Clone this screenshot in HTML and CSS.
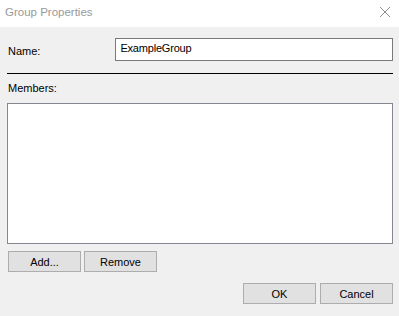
FILE: index.html
```html
<!DOCTYPE html>
<html lang="en">
<head>
    <meta charset="UTF-8">
    <title>Group Properties</title>
    <link rel="stylesheet" href="styles.css">
</head>
<body>
    <!-- Title bar -->
    <div class="titlebar">
        <span class="title">Group Properties</span>
        <svg class="close" width="12" height="12" viewBox="0 0 12 12">
            <path d="M1 1 L11 11 M11 1 L1 11" stroke="#8c8c8c" stroke-width="1" fill="none"/>
        </svg>
    </div>

    <!-- Dialog body -->
    <div class="dialog">
        <div class="name-row">
            <label for="group-name">Name:</label>
            <input type="text" id="group-name" class="textbox" value="ExampleGroup">
        </div>

        <div class="separator"></div>

        <div class="members-label">Members:</div>
        <div class="listbox"></div>

        <div class="list-buttons">
            <button class="btn">Add...</button>
            <button class="btn">Remove</button>
        </div>

        <div class="dialog-buttons">
            <button class="btn">OK</button>
            <button class="btn">Cancel</button>
        </div>
    </div>
</body>
</html>
```

FILE: styles.css
```css
body {
    margin: 0;
    padding: 0;
    background-color: #f0f0f0;
    font-family: "Liberation Sans", Arial, sans-serif;
    font-size: 11px;
    color: #000000;
    width: 399px;
    height: 316px;
    overflow: hidden;
}
.titlebar {
    height: 27px;
    background: #ffffff;
    display: flex;
    align-items: center;
    justify-content: space-between;
    padding: 0 8px 0 5px;
}
.title {
    font-size: 11.5px;
    color: #999999;
    margin-top: -3px;
}
.close {
    margin-top: -3px;
}
.dialog {
    padding: 11px 6px 0 7px;
}
.name-row {
    display: flex;
    align-items: center;
    height: 23px;
}
.name-row label {
    width: 108px;
    padding-left: 1px;
    margin-top: 2px;
}
.textbox {
    box-sizing: border-box;
    width: 279px;
    height: 23px;
    border: 1px solid #7a7a7a;
    background: #ffffff;
    font-family: "Liberation Sans", Arial, sans-serif;
    font-size: 11px;
    letter-spacing: -0.2px;
    padding: 0 4px 4px 4px;
    margin: 0;
    outline: none;
}
.separator {
    margin-top: 12px;
    height: 1px;
    width: 386px;
    background: #000000;
}
.members-label {
    margin-top: 8px;
    padding-left: 1px;
    height: 21px;
}
.listbox {
    box-sizing: border-box;
    width: 386px;
    height: 141px;
    border: 1px solid #828790;
    background: #ffffff;
}
.list-buttons {
    display: flex;
    gap: 3px;
    margin-top: 7px;
    padding-left: 1px;
}
.dialog-buttons {
    display: flex;
    justify-content: flex-end;
    gap: 4px;
    margin-top: 11px;
    width: 386px;
}
.btn {
    box-sizing: border-box;
    width: 73px;
    height: 21px;
    background-color: #e1e1e1;
    border: 1px solid #adadad;
    font-family: "Liberation Sans", Arial, sans-serif;
    font-size: 11px;
    color: #000000;
    padding: 0;
    margin: 0;
}
```
